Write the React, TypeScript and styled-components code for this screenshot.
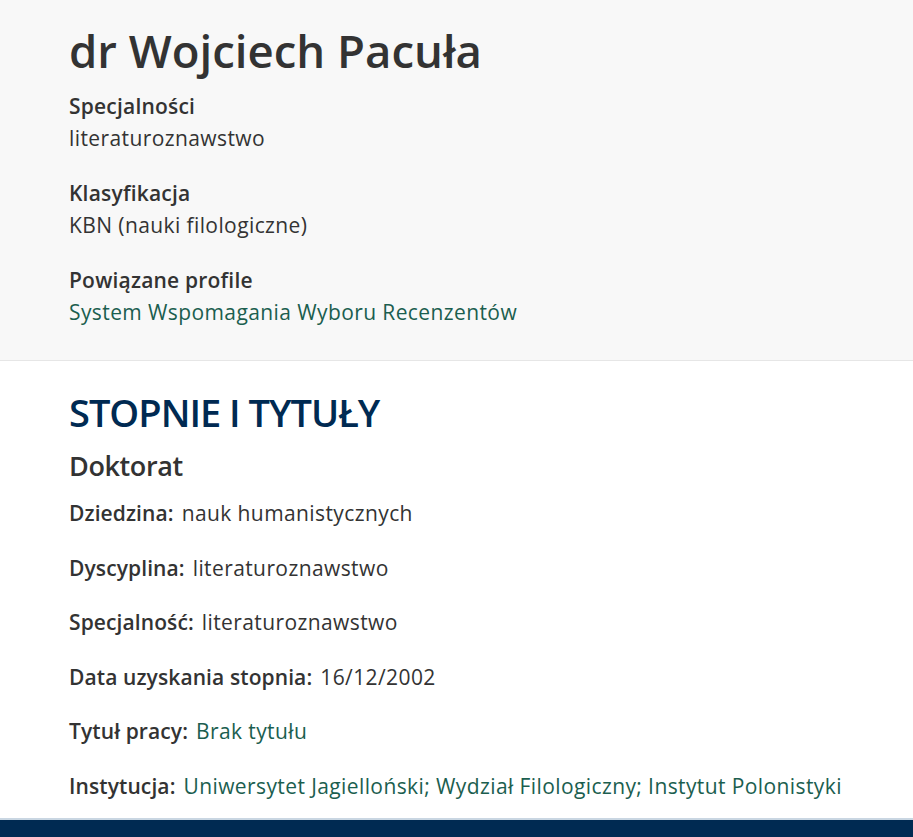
import React from 'react';
import styled, { createGlobalStyle } from 'styled-components';

const GlobalStyle = createGlobalStyle`
  body {
    margin: 0;
    background: #ffffff;
    font-family: 'Open Sans', 'Noto Sans', sans-serif;
    color: #333333;
  }
`;

const Header = styled.header`
  background: #f8f8f8;
  border-bottom: 1px solid #e6e6e6;
  padding: 21px 69px 32px;
`;

const Name = styled.h1`
  margin: 0 0 11px;
  font-size: 45.5px;
  line-height: 58px;
  font-weight: 600;
  color: #333333;
`;

const InfoList = styled.dl`
  margin: 0;
  display: flex;
  flex-direction: column;
  gap: 23px;
`;

const InfoGroup = styled.div`
  display: flex;
  flex-direction: column;
`;

const InfoLabel = styled.dt`
  font-size: 21px;
  line-height: 32px;
  font-weight: 600;
  letter-spacing: 0.2px;
`;

const InfoValue = styled.dd`
  margin: 0;
  font-size: 21px;
  line-height: 32px;
  letter-spacing: 0.4px;
`;

const Link = styled.a`
  color: #1b5e4f;
  text-decoration: none;
`;

const Section = styled.section`
  padding: 27px 69px 16px;
`;

const SectionTitle = styled.h2`
  margin: 0 0 13px;
  font-size: 38px;
  line-height: 48px;
  font-weight: 600;
  letter-spacing: -1px;
  color: #002a52;
  text-transform: uppercase;
`;

const Degree = styled.h3`
  margin: 0 0 14px;
  font-size: 27px;
  line-height: 34px;
  font-weight: 600;
  letter-spacing: -0.4px;
  color: #333333;
`;

const Rows = styled.div`
  display: flex;
  flex-direction: column;
  gap: 22.6px;
`;

const Row = styled.p`
  margin: 0;
  font-size: 21px;
  line-height: 32px;
  letter-spacing: 0.4px;
  white-space: nowrap;
`;

const RowLabel = styled.strong`
  font-weight: 600;
  letter-spacing: 0.1px;
  margin-right: 8px;
`;

const Footer = styled.footer`
  background: #002a52;
  border-top: 2px solid #c9d6e2;
  height: 17px;
`;

const info = [
  { label: 'Specjalności', value: 'literaturoznawstwo' },
  { label: 'Klasyfikacja', value: 'KBN (nauki filologiczne)' },
  { label: 'Powiązane profile', value: 'System Wspomagania Wyboru Recenzentów', link: true },
];

const rows = [
  { label: 'Dziedzina:', value: 'nauk humanistycznych' },
  { label: 'Dyscyplina:', value: 'literaturoznawstwo' },
  { label: 'Specjalność:', value: 'literaturoznawstwo' },
  { label: 'Data uzyskania stopnia:', value: '16/12/2002' },
  { label: 'Tytuł pracy:', value: 'Brak tytułu', link: true },
  {
    label: 'Instytucja:',
    value: 'Uniwersytet Jagielloński; Wydział Filologiczny; Instytut Polonistyki',
    link: true,
  },
];

const App: React.FC = () => {
  return (
    <>
      <GlobalStyle />
      <Header>
        <Name>dr Wojciech Pacuła</Name>
        <InfoList>
          {info.map((item) => (
            <InfoGroup key={item.label}>
              <InfoLabel>{item.label}</InfoLabel>
              <InfoValue>
                {item.link ? <Link href="#">{item.value}</Link> : item.value}
              </InfoValue>
            </InfoGroup>
          ))}
        </InfoList>
      </Header>
      <Section>
        <SectionTitle>Stopnie i tytuły</SectionTitle>
        <Degree>Doktorat</Degree>
        <Rows>
          {rows.map((row) => (
            <Row key={row.label}>
              <RowLabel>{row.label}</RowLabel>
              {row.link ? <Link href="#">{row.value}</Link> : row.value}
            </Row>
          ))}
        </Rows>
      </Section>
      <Footer />
    </>
  );
};

export default App;
